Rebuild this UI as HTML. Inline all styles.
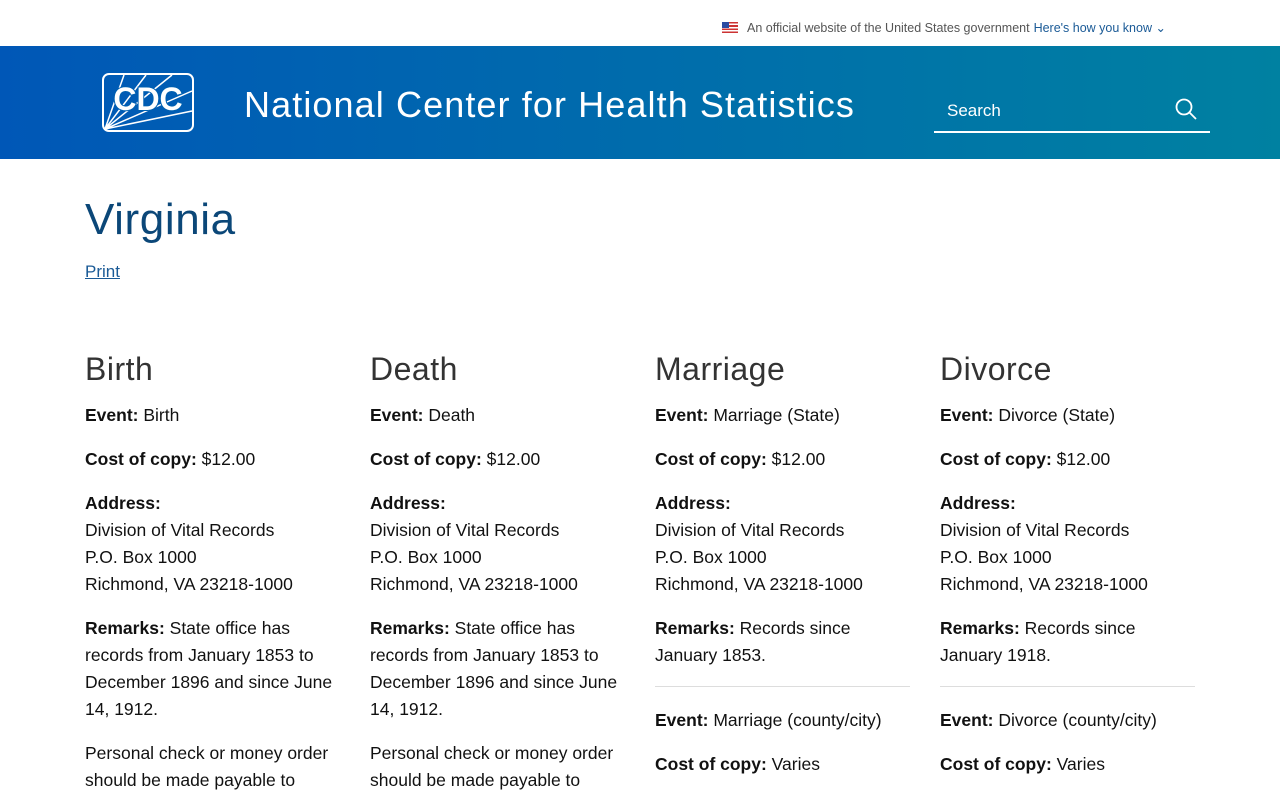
<!DOCTYPE html>
<html><head><meta charset="utf-8"><style>
*{margin:0;padding:0;box-sizing:border-box}
body{width:1280px;height:800px;overflow:hidden;font-family:"Liberation Sans",sans-serif;color:#000;background:#fff}
.gov{height:46px;position:relative;font-size:12.5px;color:#555}
.gov .t{position:absolute;left:722px;top:20px;display:flex;align-items:center}
.gov .flag{width:16px;height:11px;margin-right:9px;background:repeating-linear-gradient(#c33 0 1.6px,#fff 1.6px 3.2px);position:relative}
.gov .flag:before{content:"";position:absolute;left:0;top:0;width:7px;height:6px;background:#2a4aa0}
.gov a{color:#1a5a96;margin-left:4px}
header{height:113px;background:linear-gradient(90deg,#0057b7,#0081a1);position:relative;color:#fff}
.logo{position:absolute;left:102px;top:27px}
header h1{position:absolute;left:244px;top:38px;font-weight:400;font-size:36px;letter-spacing:1.1px}
.search{position:absolute;left:934px;top:45px;width:276px;height:42px;border-bottom:2px solid #fff;font-size:17px}
.search span{position:absolute;left:13px;top:10px}
.search svg{position:absolute;right:12px;top:6px}
h2{position:absolute;left:85px;top:195px;font-weight:400;font-size:44px;letter-spacing:.6px;color:#0b4778}
.print{position:absolute;left:85px;top:262px;color:#1a5a96;font-size:17px;text-decoration:underline}
.col{position:absolute;top:356px;width:255px;font-size:17.5px;line-height:27px;color:#111}
.col h3{font-weight:400;font-size:32px;letter-spacing:.5px;color:#333;line-height:26px;margin-bottom:20px}
.col p{margin-bottom:17px}
.col hr{border:0;border-top:1px solid #ddd;margin:3px 0 20px}
</style></head><body>
<div class="gov"><div class="t"><div class="flag"></div>An official website of the United States government <a>Here's how you know ⌄</a></div></div>
<header>
<svg class="logo" width="92" height="59" viewBox="0 0 92 59"><rect x="1" y="1" width="90" height="57" rx="6" fill="none" stroke="#fff" stroke-width="2"/><g stroke="#fff" stroke-width="1.5" fill="none"><path d="M3 56L22 2M3 56L44 2M3 56L70 2M3 56L90 18M3 56L90 38"/></g><text x="46" y="37" text-anchor="middle" font-family="Liberation Sans" font-weight="700" font-size="32" fill="#fff" stroke="#0060b0" stroke-width="2" paint-order="stroke">CDC</text></svg>
<h1>National Center for Health Statistics</h1>
<div class="search"><span>Search</span><svg width="24" height="24" viewBox="0 0 24 24" fill="none" stroke="#fff" stroke-width="1.8"><circle cx="10" cy="10" r="7.5"/><path d="M15.5 15.5L22 22"/></svg></div>
</header>
<h2>Virginia</h2>
<a class="print">Print</a>
<div class="col" style="left:85px"><h3>Birth</h3><p><b>Event:</b> Birth</p><p><b>Cost of copy:</b> $12.00</p><p><b>Address:</b><br>Division of Vital Records<br>P.O. Box 1000<br>Richmond, VA 23218-1000</p><p><b>Remarks:</b> State office has records from January 1853 to December 1896 and since June 14, 1912.</p><p>Personal check or money order should be made payable to</p></div>
<div class="col" style="left:370px"><h3>Death</h3><p><b>Event:</b> Death</p><p><b>Cost of copy:</b> $12.00</p><p><b>Address:</b><br>Division of Vital Records<br>P.O. Box 1000<br>Richmond, VA 23218-1000</p><p><b>Remarks:</b> State office has records from January 1853 to December 1896 and since June 14, 1912.</p><p>Personal check or money order should be made payable to</p></div>
<div class="col" style="left:655px"><h3>Marriage</h3><p><b>Event:</b> Marriage (State)</p><p><b>Cost of copy:</b> $12.00</p><p><b>Address:</b><br>Division of Vital Records<br>P.O. Box 1000<br>Richmond, VA 23218-1000</p><p><b>Remarks:</b> Records since January 1853.</p><hr><p><b>Event:</b> Marriage (county/city)</p><p><b>Cost of copy:</b> Varies</p></div>
<div class="col" style="left:940px"><h3>Divorce</h3><p><b>Event:</b> Divorce (State)</p><p><b>Cost of copy:</b> $12.00</p><p><b>Address:</b><br>Division of Vital Records<br>P.O. Box 1000<br>Richmond, VA 23218-1000</p><p><b>Remarks:</b> Records since January 1918.</p><hr><p><b>Event:</b> Divorce (county/city)</p><p><b>Cost of copy:</b> Varies</p></div>
</body></html>
